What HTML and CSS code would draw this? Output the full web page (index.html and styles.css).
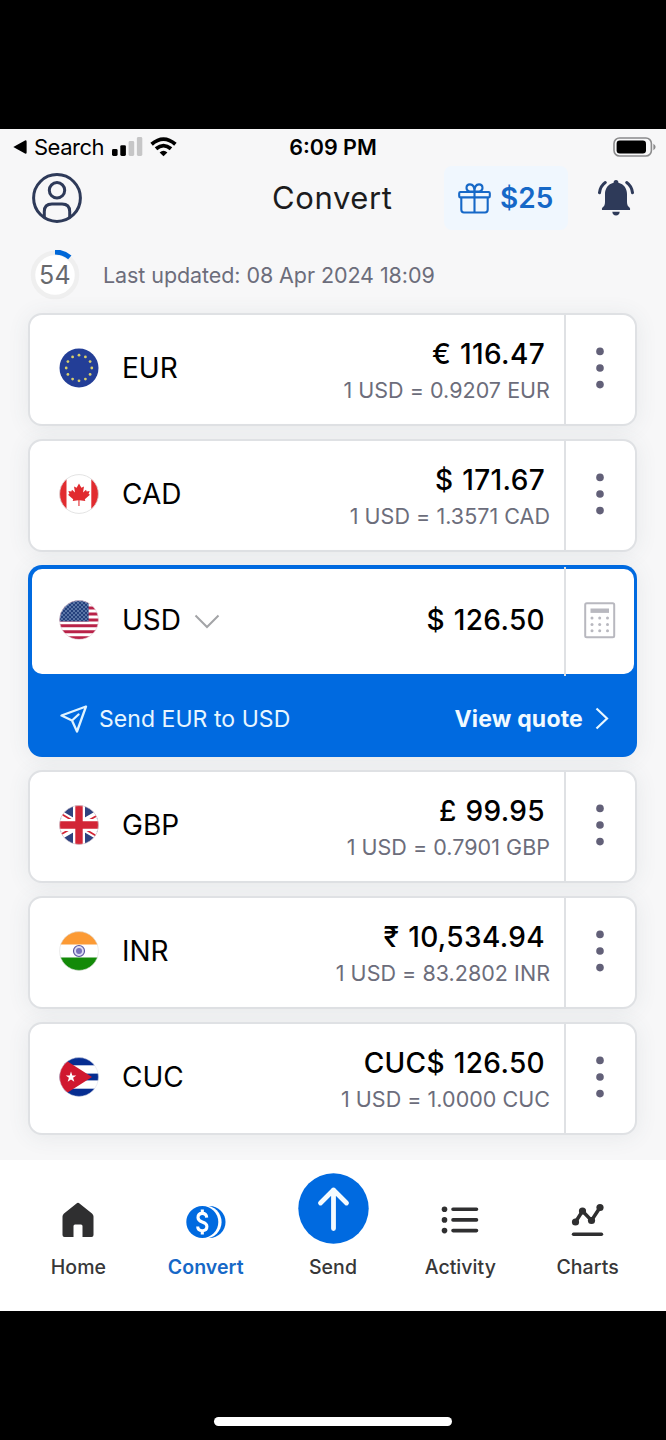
FILE: index.html
```html
<!DOCTYPE html>
<html lang="en">
<head>
<meta charset="utf-8">
<title>Convert</title>
<link rel="stylesheet" href="styles.css">
</head>
<body>
<svg width="0" height="0" class="defs" aria-hidden="true">
  <defs>
    <clipPath id="round"><circle cx="20" cy="20" r="19.5"/></clipPath>
    <symbol id="dots" viewBox="0 0 10 42">
      <circle cx="5" cy="4.4" r="3.8"/><circle cx="5" cy="21" r="3.8"/><circle cx="5" cy="37.6" r="3.8"/>
    </symbol>
  </defs>
</svg>
<div class="screen">
  <div class="status">
    <div class="status-left">
      <svg width="14" height="14" viewBox="0 0 14 14"><path d="M0.300 7 L12 .4 Q13.600 0 13.600 1.500 V12.500 Q13.600 14 12 13.600Z"/></svg>
      <span class="back">Search</span>
      <svg class="signal" width="31" height="20" viewBox="0 0 31 20"><rect x="0" y="12" width="5.600" height="7" rx="1.400"/><rect x="8.300" y="8.200" width="5.600" height="10.800" rx="1.400"/><g fill="#c6c6c7"><rect x="16.600" y="4" width="5.600" height="15" rx="1.400"/><rect x="24.900" y="0" width="5.400" height="19" rx="1.400"/></g></svg>
      <svg class="wifi" width="27" height="20" viewBox="0 0 27 20"><path d="M13.500 19.300 L9.600 15.400 Q13.500 12.300 17.400 15.400Z"/><path d="M1.600 7.200 Q13.500 -3 25.400 7.200M6 11.800 Q13.500 5.400 21 11.800" fill="none" stroke="#000" stroke-width="3.800"/></svg>
    </div>
    <div class="time">6:09 PM</div>
    <svg class="battery" width="43" height="20" viewBox="0 0 43 20"><rect x="1" y="1" width="37.400" height="18" rx="5.500" fill="none" stroke="#8b8b8c" stroke-width="1.600"/><rect x="3.600" y="3.600" width="29.400" height="12.800" rx="3.200"/><path d="M40.400 6.800 Q42.600 8 42.600 10 T40.400 13.200Z" fill="#8b8b8c"/></svg>
  </div>

  <header class="header">
    <svg class="profile" width="50" height="50" viewBox="0 0 50 50" fill="none" stroke="#2e3a59" stroke-width="3"><circle cx="25" cy="25" r="23.400"/><circle cx="25" cy="17.300" r="7.700"/><path d="M12.300 44V38.500Q12.300 31 20 31H30Q37.700 31 37.700 38.500V44"/></svg>
    <h1 class="title">Convert</h1>
    <div class="gift">
      <svg width="33" height="31" viewBox="0 0 33 31" fill="none" stroke="#1668c7" stroke-width="2.100" stroke-linejoin="round"><rect x="1.200" y="9" width="30.600" height="5.400" rx="1.200"/><path d="M3.300 14.400V26.500Q3.300 29.500 6 29.500H27Q29.700 29.500 29.700 26.500V14.400M16.500 9V29.500"/><path d="M16.500 8.500H11.500Q8.500 7.500 8.500 5Q8.500 1.400 12 1.400Q16.500 1.400 16.500 8.500ZM16.500 8.500H21.500Q24.500 7.500 24.500 5Q24.500 1.400 21 1.400Q16.500 1.400 16.500 8.500Z"/></svg>
      <span>$25</span>
    </div>
    <svg class="bell" width="36" height="36" viewBox="0 0 36 36" fill="#2e3a59"><path d="M18 0Q20.400 0 20.400 2.700C26 4 29 8.500 29 14V22Q29 26 31.500 27.500Q32.500 28.500 32 30H4Q3.500 28.500 4.500 27.500Q7 26 7 22V14C7 8.500 10 4 15.600 2.700Q15.600 0 18 0Z"/><path d="M14.300 31.800H21.700Q21.300 35.600 18 35.600T14.300 31.800Z"/><path d="M7.300 2.500Q2.300 6 1.500 12.700M28.700 2.500Q33.700 6 34.500 12.700" fill="none" stroke="#2e3a59" stroke-width="3" stroke-linecap="round"/></svg>
  </header>

  <div class="updated">
    <div class="timer">
      <svg width="50" height="50" viewBox="0 0 50 50"><circle cx="25" cy="25" r="22" fill="#fff" stroke="#efefef" stroke-width="4.500"/><path d="M25 2A23 23 0 0 1 39.800 7.400" fill="none" stroke="#0068d8" stroke-width="5"/></svg>
      <span>54</span>
    </div>
    <p class="updated-text">Last updated: 08 Apr 2024 18:09</p>
  </div>

  <main class="list">
    <article class="card">
      <div class="body">
        <svg class="flag" viewBox="0 0 40 40"><circle cx="20" cy="20" r="19.500" fill="#233e97"/><g fill="#d9cf6b"><circle cx="20" cy="7.200" r="1.400"/><circle cx="26.400" cy="8.900" r="1.400"/><circle cx="31.100" cy="13.600" r="1.400"/><circle cx="32.800" cy="20" r="1.400"/><circle cx="31.100" cy="26.400" r="1.400"/><circle cx="26.400" cy="31.100" r="1.400"/><circle cx="20" cy="32.800" r="1.400"/><circle cx="13.600" cy="31.100" r="1.400"/><circle cx="8.900" cy="26.400" r="1.400"/><circle cx="7.200" cy="20" r="1.400"/><circle cx="8.900" cy="13.600" r="1.400"/><circle cx="13.600" cy="8.900" r="1.400"/></g></svg>
        <span class="code">EUR</span>
        <div class="values"><span class="amount">€ 116.47</span><span class="rate">1 USD = 0.9207 EUR</span></div>
      </div>
      <div class="more"><svg width="10" height="42"><use href="#dots"/></svg></div>
    </article>

    <article class="card">
      <div class="body">
        <svg class="flag" viewBox="0 0 40 40"><g clip-path="url(#round)"><rect width="40" height="40" fill="#fff"/><rect width="7.500" height="40" fill="#e12b2f"/><rect x="32.300" width="8" height="40" fill="#e12b2f"/></g><circle cx="20" cy="20" r="19.400" fill="none" stroke="#dcdcdc" stroke-width=".8"/><path fill="#e12b2f" d="M20 9.600L22.400 13.800L25 12.600L24 18.400L27 15.800L27.700 17.500L30.600 17L29.600 20L31 20.800L25.800 25.200L26.300 27L20.500 26.300V32H19.400V26.300L13.700 27L14.200 25.200L9 20.800L10.400 20L9.400 17L12.300 17.500L13 15.800L16 18.400L15 12.600L17.600 13.800Z"/></svg>
        <span class="code">CAD</span>
        <div class="values"><span class="amount">$ 171.67</span><span class="rate">1 USD = 1.3571 CAD</span></div>
      </div>
      <div class="more"><svg width="10" height="42"><use href="#dots"/></svg></div>
    </article>

    <article class="active">
      <div class="active-card">
        <div class="body">
          <svg class="flag" viewBox="0 0 40 40"><defs><pattern id="stars" width="4" height="4" patternUnits="userSpaceOnUse"><circle cx="1" cy="1" r=".75"/><circle cx="3" cy="3" r=".75"/></pattern></defs><g clip-path="url(#round)"><rect width="40" height="40" fill="#fff"/><path d="M0 2H40M0 8H40M0 14H40M0 20H40M0 25.800H40M0 31.800H40M0 37.800H40" stroke="#b92248" stroke-width="2.900"/><rect width="29.600" height="21.400" fill="#24407c"/><rect width="29.600" height="21.400" fill="url(#stars)"/></g><circle cx="20" cy="20" r="19.400" fill="none" stroke="#e2cfd6" stroke-width=".6"/></svg>
          <span class="code">USD</span>
          <svg class="chevron" width="26" height="15" viewBox="0 0 26 15"><path d="M1.500 1.500L13 13L24.500 1.500" fill="none" stroke="#a3a4a7" stroke-width="2"/></svg>
          <div class="values single"><span class="amount">$ 126.50</span></div>
        </div>
        <div class="more calc"><svg width="32" height="37" viewBox="0 0 32 37" fill="#b8b8bf"><rect x="1.200" y="1.200" width="29" height="34" rx="1.500" fill="none" stroke="#b8b8bf" stroke-width="2"/><rect x="6.500" y="6.500" width="18.500" height="4.400"/><circle cx="8" cy="16" r="1.500"/><circle cx="15.700" cy="16" r="1.500"/><circle cx="23.500" cy="16" r="1.500"/><circle cx="8" cy="22.400" r="1.500"/><circle cx="15.700" cy="22.400" r="1.500"/><circle cx="23.500" cy="22.400" r="1.500"/><circle cx="8" cy="28.800" r="1.500"/><circle cx="15.700" cy="28.800" r="1.500"/><circle cx="23.500" cy="28.800" r="1.500"/></svg></div>
      </div>
      <div class="quote">
        <svg width="28" height="28" viewBox="0 0 28 28" fill="none" stroke="#dff3ff" stroke-width="2.300" stroke-linejoin="round" stroke-linecap="round"><path d="M26 1.500L1.500 10.500L12 15.500L17 26.500ZM12 15.500L18.500 9.500"/></svg>
        <span class="send-label">Send EUR to USD</span>
        <span class="view">View quote</span>
        <svg class="arrow" width="14" height="23" viewBox="0 0 14 23"><path d="M1.500 1.500L12 11.500L1.500 21.500" fill="none" stroke="#e8f7ff" stroke-width="2.200"/></svg>
      </div>
    </article>

    <article class="card">
      <div class="body">
        <svg class="flag" viewBox="0 0 40 40"><g clip-path="url(#round)"><rect width="40" height="40" fill="#2e427f"/><path d="M-5 5.500L45 34.500M45 5.500L-5 34.500" stroke="#fff" stroke-width="7"/><path d="M0 7.500L15 16.500M40 9.500L25 18M0 30.500L15 22M40 32.500L25 23.500" stroke="#d22536" stroke-width="1.800"/><path d="M20 0V40M0 20H40" stroke="#fff" stroke-width="12"/><path d="M20 0V40M0 20H40" stroke="#d22536" stroke-width="7.400"/></g><circle cx="20" cy="20" r="19.400" fill="none" stroke="#e6d6da" stroke-width=".6"/></svg>
        <span class="code">GBP</span>
        <div class="values"><span class="amount">£ 99.95</span><span class="rate">1 USD = 0.7901 GBP</span></div>
      </div>
      <div class="more"><svg width="10" height="42"><use href="#dots"/></svg></div>
    </article>

    <article class="card">
      <div class="body">
        <svg class="flag" viewBox="0 0 40 40"><g clip-path="url(#round)"><rect width="40" height="40" fill="#fff"/><rect width="40" height="13.500" fill="#fc9a34"/><rect y="26.500" width="40" height="14" fill="#138a08"/></g><circle cx="20" cy="20" r="19.400" fill="none" stroke="#ddd" stroke-width=".6"/><circle cx="20" cy="20" r="5.500" fill="#dcdcf3" stroke="#5a569f" stroke-width="1.200"/><circle cx="20" cy="20" r="3" fill="#7772ba"/></svg>
        <span class="code">INR</span>
        <div class="values"><span class="amount">₹ 10,534.94</span><span class="rate">1 USD = 83.2802 INR</span></div>
      </div>
      <div class="more"><svg width="10" height="42"><use href="#dots"/></svg></div>
    </article>

    <article class="card">
      <div class="body">
        <svg class="flag" viewBox="0 0 40 40"><g clip-path="url(#round)"><rect width="40" height="40" fill="#fff"/><rect width="40" height="8.300" fill="#062d91"/><rect y="16.600" width="40" height="6.800" fill="#062d91"/><rect y="31.700" width="40" height="9" fill="#062d91"/><path d="M0 -1L33 20L0 41Z" fill="#d0172f"/></g><circle cx="20" cy="20" r="19.400" fill="none" stroke="#d8dbe6" stroke-width=".5"/><path fill="#fff" d="M12 14.600L13.300 18.400H17.300L14.100 20.800L15.300 24.700L12 22.400L8.700 24.700L9.900 20.800L6.700 18.400H10.700Z"/></svg>
        <span class="code">CUC</span>
        <div class="values"><span class="amount">CUC$ 126.50</span><span class="rate">1 USD = 1.0000 CUC</span></div>
      </div>
      <div class="more"><svg width="10" height="42"><use href="#dots"/></svg></div>
    </article>
  </main>

  <nav class="tabs">
    <a class="tab"><span class="icon"><svg width="32" height="36" viewBox="0 0 32 36"><path d="M14.500 1.400Q16 .2 17.500 1.400L30 11.500Q31.500 12.800 31.500 14.500V33Q31.500 35 29.500 35H20.500V24Q20.500 22.500 19 22.500H13Q11.500 22.500 11.500 24V35H2.500Q.5 35 .5 33V14.500Q.5 12.800 2 11.500Z" fill="#2f2f30"/></svg></span><span>Home</span></a>
    <a class="tab on"><span class="icon"><svg class="coins" width="40" height="34" viewBox="0 0 40 34"><circle cx="23.500" cy="17" r="16" fill="#006ae0"/><circle cx="19" cy="17" r="16.600" fill="#fff"/><circle cx="16.300" cy="17" r="16" fill="#006ae0"/><path d="M20.700 12.600Q20.500 8.400 16.300 8.400Q12 8.400 12 12.500Q12 15.500 16.300 17Q20.900 18.500 20.900 21.600Q20.900 25.700 16.300 25.700Q11.800 25.700 11.700 21.500M16.300 4.500V8.500M16.300 25.500V29.500" fill="none" stroke="#fff" stroke-width="3.100"/></svg></span><span>Convert</span></a>
    <a class="tab"><span class="icon"><svg class="send" width="71" height="71" viewBox="0 0 71 71"><circle cx="35.500" cy="35.500" r="35.200" fill="#006ae0"/><path d="M35.500 55.500V17M22.500 30L35.500 17L48.500 30" fill="none" stroke="#f4fbff" stroke-width="4.800" stroke-linecap="round" stroke-linejoin="round"/></svg></span><span>Send</span></a>
    <a class="tab"><span class="icon"><svg width="38" height="28" viewBox="0 0 38 28"><path d="M12 3.200H35.500M12 13.900H35.500M12 24.600H35.500" stroke="#2f2f30" stroke-width="3.600" stroke-linecap="round"/><g fill="#2f2f30"><circle cx="3.500" cy="3.200" r="2.800"/><circle cx="3.500" cy="13.900" r="2.800"/><circle cx="3.500" cy="24.600" r="2.800"/></g></svg></span><span>Activity</span></a>
    <a class="tab"><span class="icon"><svg width="34" height="34" viewBox="0 0 34 34"><path d="M4.500 19L11.500 8L20.500 17.500L29 4.500" fill="none" stroke="#2f2f30" stroke-width="3.500"/><g fill="#2f2f30"><circle cx="4.500" cy="19" r="3.600"/><circle cx="11.500" cy="8" r="3.600"/><circle cx="20.500" cy="17.500" r="3.600"/><circle cx="29" cy="4.500" r="3.600"/></g><path d="M2.500 31.300H30.500" stroke="#2f2f30" stroke-width="3.400" stroke-linecap="round"/></svg></span><span>Charts</span></a>
  </nav>
</div>
<div class="home-indicator"></div>
</body>
</html>
```
FILE: styles.css
```css
* { box-sizing: border-box; }
body {
  margin: 0;
  padding-top: 129px;
  height: 1440px;
  background: #000;
  font-family: Inter, "Noto Sans", sans-serif;
  color: #000;
  overflow: hidden;
}
svg { display: block; flex: none; }
.defs { position: absolute; }
.screen {
  height: 1182px;
  background: #f7f7f8;
  display: flex;
  flex-direction: column;
}
.status {
  height: 37px;
  display: grid;
  grid-template-columns: 1fr auto 1fr;
  align-items: center;
  padding: 0 10px 2px 13px;
}
.status-left { display: flex; align-items: center; }
.back { font-size: 22px; letter-spacing: -0.5px; margin-left: 7px; }
.signal { margin-left: 8px; }
.wifi { margin-left: 7px; }
.time { font-size: 21.500px; font-weight: 600; letter-spacing: 0; margin-right: 3px; }
.battery { justify-self: end; }
.header {
  height: 64px;
  display: grid;
  grid-template-columns: 240px 179px auto 1fr;
  align-items: center;
  padding: 0 32px 1px 32px;
}
.title { margin: 0; font-size: 31px; line-height: 40px; font-weight: 400; letter-spacing: 0.6px; color: #1c1c1d; }
.gift {
  width: 124px;
  height: 64px;
  margin-left: -7px;
  padding-left: 14px;
  border-radius: 8px;
  background: #f0f7fe;
  display: flex;
  align-items: center;
  gap: 9px;
  color: #1668c7;
  font-size: 28px;
  font-weight: 600;
}
.bell { justify-self: end; }
.updated {
  height: 84px;
  display: flex;
  align-items: center;
  padding: 6px 0 0 30px;
  gap: 23px;
}
.timer { display: grid; place-items: center; }
.timer > * { grid-area: 1 / 1; }
.timer span { font-size: 25px; color: #68696d; letter-spacing: 0.3px; }
.updated-text { margin: 0; font-size: 21.500px; letter-spacing: -0.08px; color: #6c6d7b; }
.list {
  display: flex;
  flex-direction: column;
  gap: 14px;
  padding: 0 29px;
}
.card {
  height: 113px;
  margin: -1px 0 0 -1px;
  display: flex;
  background: #fff;
  border: 2px solid #dfe1e4;
  border-radius: 14px;
  box-shadow: 0 2px 22px rgba(70, 85, 100, 0.09);
}
.body { flex: 1; display: flex; align-items: center; padding: 0 14px 3px 29px; }
.flag { width: 40px; height: 40px; }
#stars { fill: #a9c4e6; }
.code { font-size: 28px; margin-left: 23px; }
.values {
  margin-left: auto;
  padding-top: 4px;
  display: flex;
  flex-direction: column;
  align-items: flex-end;
  gap: 3px;
}
.values.single { padding-top: 0; }
.amount { font-size: 28px; line-height: 36px; font-weight: 500; letter-spacing: 0.35px; word-spacing: 1px; margin-right: 5px; }
.rate { font-size: 21.500px; line-height: 30px; letter-spacing: 0.03px; color: #6c6d7b; }
.more {
  width: 71px;
  padding: 0 1px 3px 0;
  border-left: 2px solid #dfe1e4;
  display: grid;
  place-items: center;
  fill: #626078;
}
.active {
  height: 192px;
  margin: -1px 0 0 -1px;
  padding: 4px 3px 0 4px;
  border-radius: 14px;
  background: #006ae0;
  box-shadow: 0 2px 22px rgba(70, 85, 100, 0.09);
}
.active-card { height: 105px; display: flex; background: #fff; border-radius: 10px; }
.active .body { padding: 0 14px 4px 27px; }
.active .more { width: 70px; margin: -2px 0; padding: 0 0 3px; }
.chevron { margin: 4px 0 0 13px; }
.quote { height: 83px; display: flex; align-items: center; padding: 6px 25px 0 28px; color: #e8f6ff; }
.send-label { font-size: 23px; letter-spacing: 0.05px; margin-left: 11px; }
.view { margin-left: auto; font-size: 23px; font-weight: 700; color: #f1faff; letter-spacing: 0.2px; }
.arrow { margin-left: 12px; }
.tabs {
  margin-top: auto;
  height: 151px;
  background: #fff;
  display: grid;
  grid-template-columns: repeat(5, 127.300px);
  justify-content: center;
}
.tab { display: flex; flex-direction: column; align-items: center; font-size: 19.500px; line-height: 26px; font-weight: 500; color: #373738; letter-spacing: 0.05px; }
.icon { height: 94px; padding-top: 26px; display: grid; place-items: center; }
.icon .send { margin: -24px 0 0 1px; }
.icon .coins { margin-top: 4px; }
.on { color: #1668c7; font-weight: 600; }
.home-indicator { width: 238px; height: 9px; border-radius: 5px; background: #fff; margin: 106px auto 0; }
```
